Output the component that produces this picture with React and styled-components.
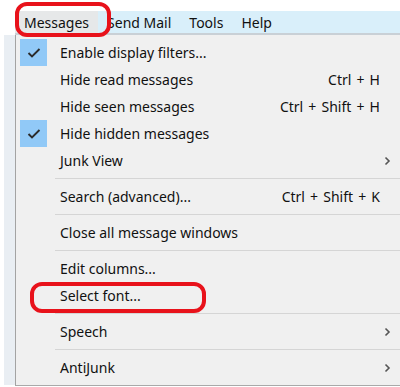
import React from "react";
import styled, { createGlobalStyle } from "styled-components";

const Global = createGlobalStyle`
  html, body { margin: 0; padding: 0; background: #ffffff; }
  body { overflow: hidden; }
  #root { width: 400px; height: 387px; }
`;

const Page = styled.div`
  position: relative;
  display: flex;
  width: 400px;
  height: 387px;
  overflow: hidden;
  background: #ffffff;
  font-family: "Noto Sans", "Open Sans", sans-serif;
  font-size: 14px;
  color: #111111;
`;

const LeftGutter = styled.div`
  flex: 0 0 15px;
  margin-top: 35px;
  margin-bottom: 2px;
  background: linear-gradient(to right, #ffffff 0 4px, #e9eef3 4px 100%);
`;

const Main = styled.div`
  flex: 1 1 auto;
  display: flex;
  flex-direction: column;
  min-width: 0;
`;

const MenuBar = styled.div`
  margin-top: 11px;
  height: 22px;
  display: flex;
  align-items: stretch;
  background: #d9effa;
  border-bottom: 2px solid #c9d0d6;
`;

const MenuTitle = styled.div`
  display: flex;
  align-items: center;
  padding: 0 9px;
  background: ${(p) => (p.$active ? "#e6e8e9" : "transparent")};
  white-space: nowrap;
`;

const Dropdown = styled.div`
  flex: 1 1 auto;
  background: #f0f0f0;
  border-left: 1px solid #a3a3a3;
  border-bottom: 1px solid #a9a9a9;
  padding: 4px 0 3px;
  margin-bottom: 1px;
`;

const Row = styled.div`
  display: grid;
  grid-template-columns: 44px 1fr auto 20px;
  align-items: center;
  height: 27px;
  white-space: nowrap;
`;

const CheckCell = styled.div`
  height: 27px;
  display: flex;
  align-items: stretch;
`;

const CheckBox = styled.div`
  margin-left: 4px;
  width: 27px;
  height: 27px;
  background: #91c9f7;
  display: flex;
  align-items: center;
  justify-content: center;
`;

const Label = styled.span``;

const Shortcut = styled.span`
  text-align: right;
  word-spacing: 1.5px;
`;

const ArrowCell = styled.div`
  display: flex;
  align-items: center;
  padding-left: 4px;
`;

const Separator = styled.div`
  height: 9px;
  display: flex;
  align-items: center;
  padding-left: 39px;
  &::after {
    content: "";
    flex: 1;
    height: 1px;
    background: #d5d5d5;
  }
`;

const Annotation = styled.div`
  position: absolute;
  left: ${(p) => p.$x}px;
  top: ${(p) => p.$y}px;
  width: ${(p) => p.$w}px;
  height: ${(p) => p.$h}px;
  box-sizing: border-box;
  border: 4px solid #e8121b;
  border-radius: 12px;
  pointer-events: none;
`;

const Check = () => (
  <svg width="14" height="12" viewBox="0 0 14 12">
    <polyline
      points="1.5,6 5,9.5 12.5,2"
      fill="none"
      stroke="#2b2b2b"
      strokeWidth="1.9"
    />
  </svg>
);

const Chevron = () => (
  <svg width="7" height="10" viewBox="0 0 7 10">
    <polyline
      points="1.5,1.5 5,5 1.5,8.5"
      fill="none"
      stroke="#555555"
      strokeWidth="1.6"
    />
  </svg>
);

const items = [
  { label: "Enable display filters...", checked: true },
  { label: "Hide read messages", shortcut: "Ctrl + H" },
  { label: "Hide seen messages", shortcut: "Ctrl + Shift + H" },
  { label: "Hide hidden messages", checked: true },
  { label: "Junk View", submenu: true },
  { sep: true },
  { label: "Search (advanced)...", shortcut: "Ctrl + Shift + K" },
  { sep: true },
  { label: "Close all message windows" },
  { sep: true },
  { label: "Edit columns..." },
  { label: "Select font..." },
  { sep: true },
  { label: "Speech", submenu: true },
  { sep: true },
  { label: "AntiJunk", submenu: true },
];

const titles = ["Messages", "Send Mail", "Tools", "Help"];

export default function App() {
  return (
    <>
      <Global />
      <Page>
        <LeftGutter />
        <Main>
          <MenuBar>
            {titles.map((t, i) => (
              <MenuTitle key={t} $active={i === 0}>
                {t}
              </MenuTitle>
            ))}
          </MenuBar>
          <Dropdown>
            {items.map((it, i) =>
              it.sep ? (
                <Separator key={i} />
              ) : (
                <Row key={i}>
                  <CheckCell>
                    {it.checked && (
                      <CheckBox>
                        <Check />
                      </CheckBox>
                    )}
                  </CheckCell>
                  <Label>{it.label}</Label>
                  <Shortcut>{it.shortcut}</Shortcut>
                  <ArrowCell>{it.submenu && <Chevron />}</ArrowCell>
                </Row>
              )
            )}
          </Dropdown>
        </Main>
        <Annotation $x={15} $y={2} $w={96} $h={35} />
        <Annotation $x={30} $y={282} $w={176} $h={31} />
      </Page>
    </>
  );
}
